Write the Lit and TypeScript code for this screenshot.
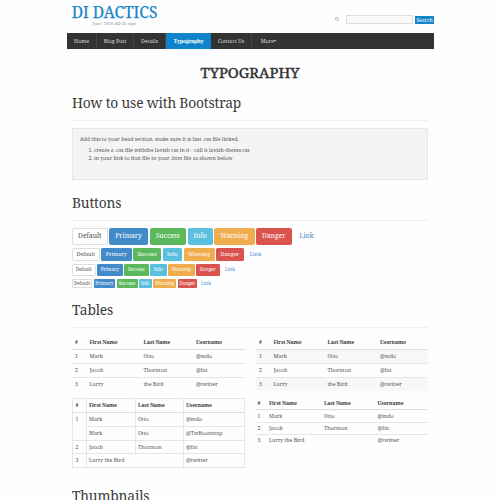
import { LitElement, html, css } from "lit";
import { customElement, property } from "lit/decorators.js";

const kinds = ["Default", "Primary", "Success", "Info", "Warning", "Danger"];
const people = [
  ["1", "Mark", "Otto", "@mdo"],
  ["2", "Jacob", "Thornton", "@fat"],
  ["3", "Larry", "the Bird", "@twitter"],
];

@customElement("button-row")
export class ButtonRow extends LitElement {
  @property() size = "lg";
  @property({ type: Array }) widths: number[] = [];

  static styles = css`
    :host { display: block; }
    .row { display: flex; gap: 1.5px; }
    .btn {
      box-sizing: border-box; flex: none; display: flex; align-items: center; justify-content: center;
      border-radius: 2px; color: #fff; white-space: nowrap;
    }
    .lg { height: 17px; font-size: 6.7px; }
    .md { height: 12.7px; font-size: 5.3px; border-radius: 1.5px; }
    .sm { height: 11.4px; font-size: 4.6px; border-radius: 1.3px; }
    .xs { height: 8.6px; font-size: 4.6px; border-radius: 1px; }
    .default { color: #505050; border: 1px solid #ddd; background: #fff; }
    .primary { background: #428bca; }
    .success { background: #5cb85c; }
    .info { background: #5bc0de; }
    .warning { background: #f0ad4e; }
    .danger { background: #d9534f; }
    .link { color: #428bca; }
  `;

  render() {
    return html`<div class="row">
      ${[...kinds, "Link"].map(
        (k, i) => html`<span class="btn ${this.size} ${k.toLowerCase()}" style="width:${this.widths[i]}px">${k}</span>`
      )}
    </div>`;
  }
}

@customElement("app-root")
export class AppRoot extends LitElement {
  static styles = css`
    :host {
      display: block; width: 500px; height: 500px; overflow: hidden; background: #fefefe;
      font-family: "Noto Serif", "Droid Serif", "DejaVu Serif Condensed", "DejaVu Serif", serif;
      font-stretch: condensed; font-size: 5.22px; line-height: 7.3px; color: #505050;
    }
    .page { width: 367px; margin-left: 67px; }
    header { display: flex; justify-content: space-between; height: 33px; }
    .brand { width: 95px; text-align: center; padding-top: 2px; white-space: nowrap; }
    .logo { font-size: 15.6px; line-height: 20px; color: #1784c9; -webkit-text-stroke: 0.25px #1784c9; }
    .tag { font-size: 4px; line-height: 4px; letter-spacing: 0.25px; color: #888; }
    .search { display: flex; align-items: center; height: 9px; margin-top: 15px; }
    .search svg { width: 4.5px; height: 4.5px; margin-right: 6.5px; }
    .field { box-sizing: border-box; width: 67px; height: 9px; border: 1px solid #ddd; background: #fafafa; margin-right: 2.5px; }
    .go { width: 19px; height: 8px; line-height: 8px; font-size: 5px; text-align: center; background: #1385c9; color: #fff; }
    nav { display: flex; height: 16px; line-height: 16px; background: #333; color: #ddd; white-space: nowrap; }
    nav span { box-sizing: border-box; text-align: center; border-right: 1px solid #444; }
    .home { width: 30px; }
    .blog { width: 37px; }
    .details { width: 32px; }
    nav .active { width: 45px; background: #0e84cc; color: #fff; font-weight: bold; letter-spacing: -0.2px; border: 0; }
    .contact { width: 41px; }
    nav .more { width: 33px; border: 0; }
    .caret { display: inline-block; border: 1.6px solid transparent; border-top: 2px solid #ddd; border-bottom: 0; vertical-align: 1px; margin-left: 0.5px; }
    main { padding: 0 6px 0 5px; }
    h1 { margin: 13px 0 0; font-size: 14.8px; line-height: 20px; text-align: center; font-weight: normal; color: #333; -webkit-text-stroke: 0.45px #333; }
    h2 { box-sizing: border-box; margin: 0; font-size: 13.8px; letter-spacing: -0.18px; line-height: 20px; font-weight: normal; color: #3a3a3a; height: 28px; white-space: nowrap; }
    .ruled { border-bottom: 1px solid #f0f0f0; }
    .how { margin-top: 11px; }
    .well { box-sizing: border-box; height: 52px; margin-top: 7px; padding: 7px; border: 1px solid #e6e6e6; background: #f4f4f4; }
    .well ol { margin: 4px 0 0; padding: 0 0 0 14px; }
    .buttons { margin-top: 13px; }
    .sizes { height: 60px; margin-top: 6.5px; display: grid; row-gap: 3.6px; align-content: start; }
    .tables-title { margin-top: 12.5px; }
    .tables { display: flex; justify-content: space-between; height: 158px; padding-top: 7px; box-sizing: border-box; }
    .left { width: 173px; }
    .right { width: 172px; }
    table { width: 100%; border-collapse: separate; border-spacing: 0; table-layout: fixed; }
    th, td { box-sizing: border-box; padding: 0 0 0 3px; text-align: left; height: 14px; line-height: 13px; border-top: 1px solid #e6e6e6; white-space: nowrap; vertical-align: top; }
    th { color: #404040; border-top-color: transparent; border-bottom: 1px solid #ddd; letter-spacing: -0.13px; }
    tbody tr:first-child td { border-top: 0; height: 13px; }
    .c0 { width: 14.5px; }
    .c1 { width: 54px; }
    .c2 { width: 52.5px; }
    .striped tbody tr:nth-child(odd) { background: #f8f8f8; }
    .bordered { margin-top: 7px; border-right: 1px solid #e6e6e6; border-bottom: 1px solid #e6e6e6; }
    .bordered th, .bordered td { border-left: 1px solid #e6e6e6; padding-left: 2.5px; height: 13.8px; line-height: 12.8px; }
    .bordered th { border-top-color: #e6e6e6; }
    .b0 { width: 13.5px; }
    .b1 { width: 49px; }
    .b2 { width: 48px; }
    .condensed { margin-top: 6px; }
    .condensed th, .condensed td { padding-left: 1.5px; height: 12px; line-height: 11px; }
    .condensed tbody tr:first-child td { height: 11px; line-height: 12px; }
    .d0 { width: 11.5px; }
    .d1 { width: 55px; }
    .d2 { width: 53.5px; }
  `;

  private head(p: string) {
    return html`<thead><tr>
      ${["#", "First Name", "Last Name", "Username"].map((h, i) => html`<th class="${p}${i}">${h}</th>`)}
    </tr></thead>`;
  }

  private row(cells: string[]) {
    return html`<tr>${cells.map((c) => html`<td>${c}</td>`)}</tr>`;
  }

  render() {
    return html`<div class="page">
      <header>
        <div class="brand"><div class="logo">DI DACTICS</div><div class="tag">June 2016 AD Design</div></div>
        <div class="search">
          <svg viewBox="0 0 10 10" fill="none" stroke="#888" stroke-width="1.3"><circle cx="4" cy="4" r="3" /><path d="M6.2 6.2 9.3 9.3" /></svg>
          <div class="field"></div><div class="go">Search</div>
        </div>
      </header>
      <nav>
        <span class="home">Home</span><span class="blog">Blog Post</span><span class="details">Details</span><span
          class="active">Typography</span><span class="contact">Contact Us</span><span class="more">More<i class="caret"></i></span>
      </nav>
      <main>
        <h1>TYPOGRAPHY</h1>
        <h2 class="ruled how">How to use with Bootstrap</h2>
        <div class="well">
          Add this to your head section, make sure it is last .css file linked.
          <ol>
            <li>create a .css file withthe lavish css in it - call it lavish-theme.css</li>
            <li>in your link to that file in your .htm file as shown below</li>
          </ol>
        </div>
        <h2 class="ruled buttons">Buttons</h2>
        <div class="sizes">
          <button-row size="lg" .widths=${[35.5, 39, 36.5, 25, 40.5, 35.5, 27]}></button-row>
          <button-row size="md" .widths=${[27.5, 30.5, 28, 19.5, 31, 27.5, 21]}></button-row>
          <button-row size="sm" .widths=${[23.5, 25.5, 24.5, 16.5, 26.5, 23.5, 18]}></button-row>
          <button-row size="xs" .widths=${[20, 21.5, 21, 12.5, 23, 19.5, 15]}></button-row>
        </div>
        <h2 class="ruled tables-title">Tables</h2>
        <div class="tables">
          <div class="left">
            <table>${this.head("c")}<tbody>${people.map((p) => this.row(p))}</tbody></table>
            <table class="bordered">${this.head("b")}<tbody>
              <tr><td rowspan="2">1</td><td>Mark</td><td>Otto</td><td>@mdo</td></tr>
              ${this.row(["Mark", "Otto", "@TwBootstrap"])}
              ${this.row(people[1])}
              <tr><td>3</td><td colspan="2">Larry the Bird</td><td>@twitter</td></tr>
            </tbody></table>
          </div>
          <div class="right">
            <table class="striped">${this.head("c")}<tbody>${people.map((p) => this.row(p))}</tbody></table>
            <table class="condensed">${this.head("d")}<tbody>
              ${this.row(people[0])}
              ${this.row(people[1])}
              <tr><td>3</td><td colspan="2">Larry the Bird</td><td>@twitter</td></tr>
            </tbody></table>
          </div>
        </div>
        <h2>Thumbnails</h2>
      </main>
    </div>`;
  }
}
